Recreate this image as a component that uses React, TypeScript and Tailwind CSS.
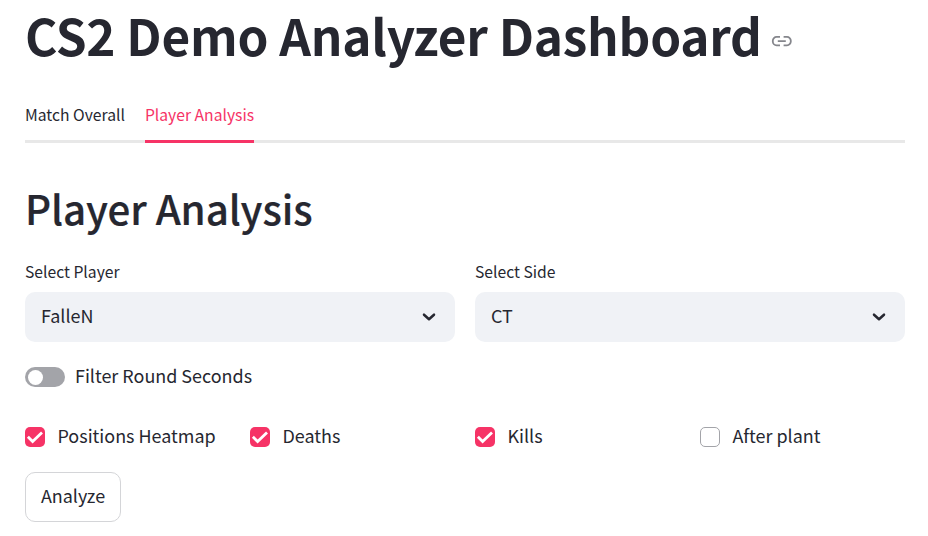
import React from "react";

function Chevron() {
  return (
    <svg className="size-[20px]" viewBox="0 0 20 20" aria-hidden="true">
      <path d="M5 7.7 L10 12.2 L15 7.7" fill="none" stroke="#262730" strokeWidth="2.5" strokeLinecap="round" strokeLinejoin="round" />
    </svg>
  );
}

function Select({ label, value }: { label: string; value: string }) {
  return (
    <div className="flex w-[430px] flex-col">
      <label className="h-[30px] text-[15.7px] leading-[20px]">{label}</label>
      <div className="flex h-[50px] items-center justify-between rounded-[10px] bg-[#f0f2f6] px-4 text-[17.95px] leading-8">
        <span className="pb-1">{value}</span>
        <Chevron />
      </div>
    </div>
  );
}

function Check({ label, checked }: { label: string; checked?: boolean }) {
  return (
    <div className="flex w-[225px] items-center">
      {checked ? (
        <span className="flex size-5 items-center justify-center rounded-[5px] bg-[#f63366]">
          <svg className="size-5" viewBox="0 0 20 20" fill="none">
            <path d="M2.9 9.8 L7.6 14.5 L17 5.5" stroke="#fff" strokeWidth="2.8" />
          </svg>
        </span>
      ) : (
        <span className="size-5 rounded-[5px] border border-[#a3a4a9] bg-white" />
      )}
      <span className="ml-[12.5px] pb-1 text-[17.95px] leading-[30px]">{label}</span>
    </div>
  );
}

export default function App() {
  return (
    <main className="h-[536px] w-[928px] overflow-hidden bg-white pl-[25px] font-['Noto_Sans_CJK_SC',sans-serif] text-[#262730]">
      <header className="flex h-[75px] items-center">
        <h1 className="h-[80px] whitespace-nowrap text-[49.5px] font-bold leading-[73px] tracking-[-0.23px]">CS2 Demo Analyzer Dashboard</h1>
        <svg className="ml-[9px] mt-[7px] h-[20px] w-[22px]" viewBox="0 0 22 20" fill="none" stroke="#85868c" strokeWidth="1.8">
          <path d="M9 5.9H5.6A3.8 3.8 0 0 0 1.8 9.7V10.5A3.8 3.8 0 0 0 5.6 14.3H9M12.6 5.9H16A3.8 3.8 0 0 1 19.8 9.7V10.5A3.8 3.8 0 0 1 16 14.3H12.6M6.8 10.1h8" />
        </svg>
      </header>
      <nav className="mt-[15px] flex h-[53px] w-[880px] gap-5 border-b-[3px] border-[#e8e8e8] text-[15.7px] leading-[50px]">
        <span>Match Overall</span>
        <span className="h-[53px] border-b-[3px] border-[#f63366] text-[#f63366]">Player Analysis</span>
      </nav>
      <h2 className="mt-[40px] h-[54px] text-[40.3px] font-medium leading-[50px] tracking-[-0.1px] [-webkit-text-stroke:0.2px_#262730]">Player Analysis</h2>
      <section className="mt-[25px] flex gap-5">
        <Select label="Select Player" value="FalleN" />
        <Select label="Select Side" value="CT" />
      </section>
      <div className="mt-[19px] flex h-8 items-center">
        <span className="flex h-5 w-10 items-center rounded-full bg-[#a3a4a9] pl-[3px]">
          <span className="size-[15px] rounded-full bg-white" />
        </span>
        <span className="ml-[10px] pb-1 text-[17.95px] leading-[30px]">Filter Round Seconds</span>
      </div>
      <section className="mt-[28px] flex h-8">
        <Check label="Positions Heatmap" checked />
        <Check label="Deaths" checked />
        <Check label="Kills" checked />
        <Check label="After plant" />
      </section>
      <button className="mt-[19px] h-[50px] w-24 rounded-[10px] border border-[#d4d5d8] pb-1 text-[17.95px] leading-[44px]">Analyze</button>
    </main>
  );
}
